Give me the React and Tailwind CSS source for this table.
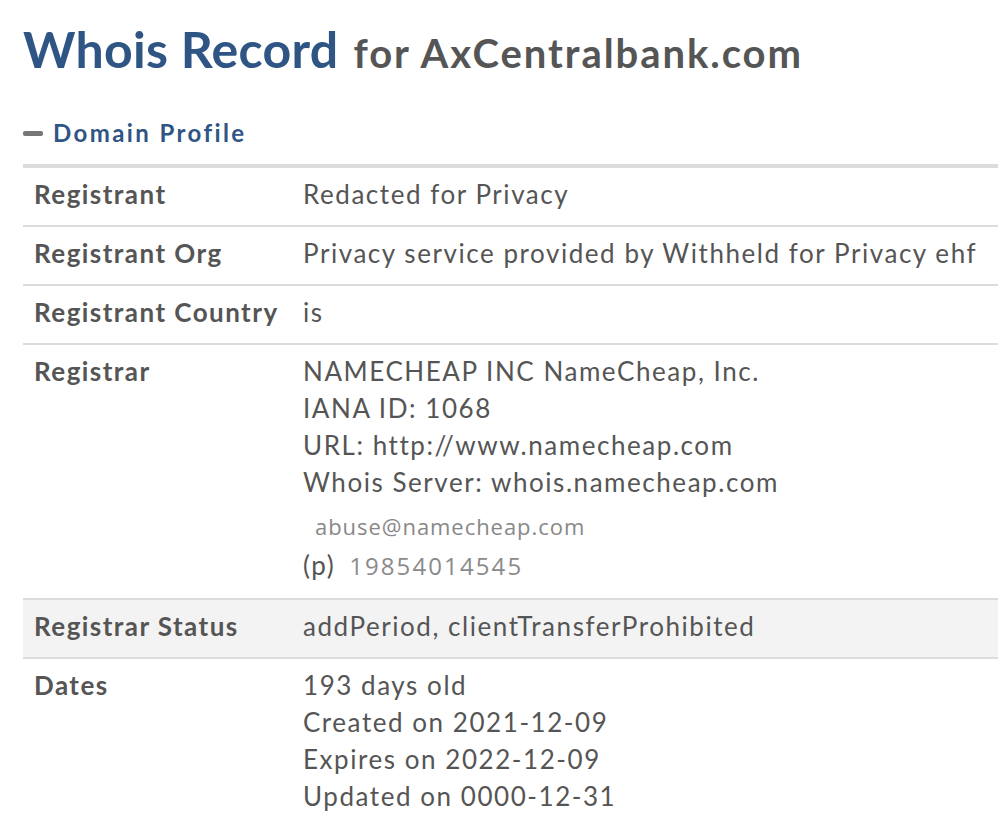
import React from 'react';

const rows = [
  { label: 'Registrant', lines: ['Redacted for Privacy'] },
  { label: 'Registrant Org', lines: ['Privacy service provided by Withheld for Privacy ehf'] },
  { label: 'Registrant Country', lines: ['is'] },
  { label: 'Registrar', registrar: true },
  { label: 'Registrar Status', lines: ['addPeriod, clientTransferProhibited'], shaded: true },
  { label: 'Dates', lines: ['193 days old', 'Created on 2021-12-09', 'Expires on 2022-12-09', 'Updated on 0000-12-31'] },
];

function Row({ row, last }) {
  return (
    <div
      className={`flex ${row.shaded ? 'bg-[#f3f3f3]' : 'bg-white'} ${last ? '' : 'border-b-2 border-[#dcdcdc]'}`}
    >
      <div className="w-[280px] shrink-0 pl-[11px] pt-[8px] pb-[12px] font-bold text-[#555] tracking-[1.45px]">{row.label}</div>
      <div className="flex-1 pt-[8px] pb-[12px]">
        {row.registrar ? (
          <>
            <div>NAMECHEAP INC NameCheap, Inc.</div>
            <div>IANA ID: 1068</div>
            <div>URL: http://www.namecheap.com</div>
            <div>Whois Server: whois.namecheap.com</div>
            <div className="mt-[7px] pl-[12px] text-[22px] leading-[37px] tracking-[0.95px] text-[#888] font-['Open_Sans',sans-serif]">
              abuse@namecheap.com
            </div>
            <div className="flex items-baseline leading-[40px]">
              <span>(p)</span>
              <span className="ml-[14px] text-[24px] tracking-[2.1px] text-[#8a8a8a] font-['Open_Sans',sans-serif]">19854014545</span>
            </div>
          </>
        ) : (
          row.lines.map((l) => <div key={l}>{l}</div>)
        )}
      </div>
    </div>
  );
}

export default function App() {
  return (
    <div className="h-[828px] bg-white font-['Lato',sans-serif] text-[#555] pl-[23px] overflow-hidden">
      <h1 className="pt-[12px] flex items-baseline whitespace-nowrap">
        <span className="text-[50px] font-bold text-[#2f5585] tracking-[0.3px]">Whois Record</span>
        <span className="ml-[15px] text-[40px] font-bold text-[#555] tracking-[1.95px]">for AxCentralbank.com</span>
      </h1>
      <div className="mt-[28px] flex items-center text-[24px] font-bold text-[#2f5585] tracking-[2.4px]">
        <span className="inline-block w-[20px] h-[5px] rounded-[2px] bg-[#777] mr-[10px]" />
        Domain Profile
      </div>
      <div className="mt-[13px] border-t-4 border-[#dcdcdc] text-[26px] leading-[37px] tracking-[1.55px] text-[#555]">
        {rows.map((r, i) => (
          <Row key={r.label} row={r} last={i === rows.length - 1} />
        ))}
      </div>
    </div>
  );
}
